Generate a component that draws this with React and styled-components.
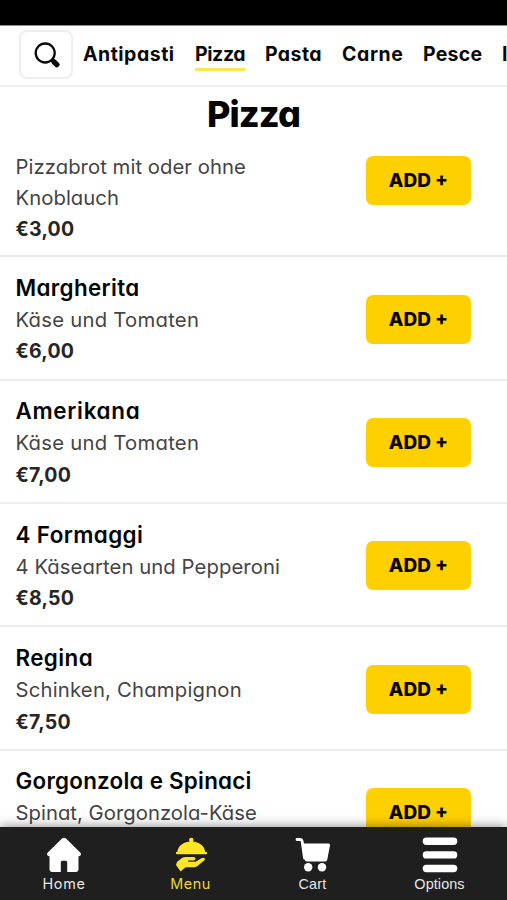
import React from 'react';
import styled, { createGlobalStyle } from 'styled-components';

const GlobalStyle = createGlobalStyle`
  * { box-sizing: border-box; }
  body {
    margin: 0;
    background: #fff;
    overflow: hidden;
    font-family: Inter, "Liberation Sans", sans-serif;
    font-feature-settings: "cv11";
  }
`;

const Screen = styled.div`
  width: 507px;
  height: 900px;
  display: flex;
  flex-direction: column;
  overflow: hidden;
  background: #fff;
`;

const StatusBar = styled.div`
  flex: none;
  height: 26px;
  background: #000;
  border-bottom: 1px solid #8c8c8c;
`;

const CategoryBar = styled.nav`
  flex: none;
  display: flex;
  align-items: flex-start;
  height: 61px;
  padding: 4px 0 0 19px;
  border-bottom: 2px solid #eee;
  overflow: hidden;
`;

const SearchButton = styled.button`
  flex: none;
  display: flex;
  align-items: center;
  justify-content: center;
  width: 54px;
  height: 49px;
  margin-right: 10px;
  padding: 0 0 0 1px;
  background: #fff;
  border: 2px solid #eee;
  border-radius: 8px;
`;

const Category = styled.a`
  flex: none;
  width: ${(props) => props.$width}px;
  height: 41px;
  margin-right: 20px;
  padding-top: 9px;
  color: #0a0a0a;
  font-size: 19.5px;
  font-weight: 700;
  line-height: 30px;
  letter-spacing: ${(props) => props.$spacing || 0}px;
  white-space: nowrap;
  border-bottom: 3px solid ${(props) => (props.$active ? '#f8e84e' : 'transparent')};
`;

const Heading = styled.h1`
  flex: none;
  height: 64px;
  margin: 0;
  padding-top: 4px;
  color: #050505;
  font-size: 36px;
  font-weight: 800;
  line-height: 46px;
  letter-spacing: -.9px;
  text-align: center;
`;

const List = styled.div`
  flex: 1;
  min-height: 0;
  overflow: hidden;
`;

const Row = styled.div`
  display: flex;
  align-items: ${(props) => (props.$scrolled ? 'flex-start' : 'center')};
  justify-content: space-between;
  height: ${(props) => (props.$scrolled ? 106.2 : 123.4)}px;
  padding: ${(props) => (props.$scrolled ? 1 : 2)}px 36px 0 15.500px;
  border-bottom: 2px solid #ececec;

  button {
    margin-top: ${(props) => (props.$scrolled ? 4 : 0.4)}px;
  }
`;

const Info = styled.div`
  width: 290px;
`;

const Name = styled.h2`
  margin: 0;
  color: #050505;
  font-size: 22.4px;
  font-weight: 600;
  line-height: 34px;
  letter-spacing: ${(props) => props.$spacing || 0}px;
  white-space: nowrap;
`;

const Description = styled.p`
  margin: 0;
  color: #444;
  font-size: 20.3px;
  line-height: 30.5px;
  letter-spacing: ${(props) => props.$spacing || 0}px;
  white-space: nowrap;
`;

const Price = styled.p`
  margin: 0;
  padding-top: 1px;
  color: #262626;
  font-size: 19.5px;
  font-weight: 700;
  line-height: 30.5px;
  letter-spacing: .2px;
`;

const AddButton = styled.button`
  width: 105px;
  height: 49px;
  padding: 0;
  background: #ffd000;
  border: 0;
  border-radius: 7px;
  color: #0a0800;
  font-family: inherit;
  font-size: 19px;
  font-weight: 800;
`;

const TabBar = styled.footer`
  flex: none;
  position: relative;
  display: flex;
  justify-content: space-around;
  height: 73px;
  padding-top: 10px;
  background: #1f1f1f;
  box-shadow: 0 0 11px rgba(0, 0, 0, .5);
`;

const Tab = styled.a`
  display: flex;
  flex-direction: column;
  align-items: center;
  width: ${(props) => props.$width}px;
  color: ${(props) => (props.$active ? '#fce625' : '#fff')};
`;

const TabLabel = styled.span`
  color: ${(props) => (props.$active ? '#e6da35' : '#e8e8e8')};
  font-family: ${(props) => (props.$plain ? '"Liberation Sans", sans-serif' : 'inherit')};
  font-size: 14.4px;
  line-height: 22px;
  letter-spacing: ${(props) => props.$spacing || 0}px;
  white-space: nowrap;
`;

const SearchIcon = () => (
  <svg width="26" height="26" viewBox="0 0 26 26" fill="none" stroke="#0a0a0a" strokeLinecap="round">
    <circle cx="11.200" cy="11" r="9.500" strokeWidth="2.300" />
    <path d="M18 18l1.500 1.500" strokeWidth="2.500" />
    <path d="M20 19.800l2.800 2.800" strokeWidth="5.400" />
  </svg>
);

const HomeIcon = () => (
  <svg width="36" height="36" viewBox="0 0 36 36" fill="currentColor">
    <path d="M16 1.600q2-1.500 4 0l14.200 14q1.800 2-.2 3.200-.8.500-1.500.5V32q0 3-3 3h-8.300V25.200q0-1.500-1.500-1.500h-3.400q-1.500 0-1.500 1.500V35H6.500q-3 0-3-3V19.300q-.700 0-1.500-.5-2-1.200-.200-3.200z" />
  </svg>
);

const ServingIcon = () => (
  <svg width="36" height="36" viewBox="0 0 36 36" fill="currentColor">
    <circle cx="18.300" cy="3" r="2.300" />
    <path d="M4.200 15.500C5 8.500 10.500 4.500 18.300 4.500s13.200 4 14 11z" />
    <path d="M3 15h31v1.500q0 .8-1 .8H4q-1 0-1-.8z" />
    <path d="M3 28l1-3 4.600-3.700q1.800-1.300 4-1.300h8.200q1.700.1 1.700 1.700t-1.700 1.700h-5.600v1.300h7.300l6.400-3.600q1.800-.7 2.700.2.900 1.100-.4 2.300l-6.700 5.500q-1.300 1.100-3 1.100h-7.300q-2 0-3.200 1.200l-3.400 3z" />
  </svg>
);

const CartIcon = () => (
  <svg width="36" height="36" viewBox="0 0 36 36" fill="currentColor">
    <path d="M2 2.500h3.300q1.500 0 1.800 1.500L9.500 21" fill="none" stroke="currentColor" strokeWidth="2.800" strokeLinecap="round" />
    <path d="M7.200 6.500h26.300q1.800 0 1.500 1.800l-2.600 13.600q-.4 2.700-3 2.700H13q-3 0-3.500-2.700z" />
    <circle cx="13.200" cy="30.300" r="4.200" />
    <circle cx="27" cy="30.300" r="4.200" />
  </svg>
);

const BarsIcon = () => (
  <svg width="36" height="36" viewBox="0 0 36 36" fill="currentColor">
    <rect x=".7" y=".6" width="34.600" height="7.400" rx="3.700" />
    <rect x=".7" y="14.200" width="34.600" height="7.400" rx="3.700" />
    <rect x=".7" y="27.800" width="34.600" height="7.400" rx="3.700" />
  </svg>
);

const categories = [
  { label: 'Antipasti', width: 92, spacing: 0.5 },
  { label: 'Pizza', width: 50, spacing: -0.4, active: true },
  { label: 'Pasta', width: 57, spacing: 0.4 },
  { label: 'Carne', width: 61, spacing: 0.6 },
  { label: 'Pesce', width: 59, spacing: 0.25 },
  { label: 'Insalata', width: 80 },
];

const dishes = [
  { lines: ['Pizzabrot mit oder ohne', 'Knoblauch'], lineSpacing: 0.05, price: '€3,00' },
  { name: 'Margherita', spacing: 0.35, lines: ['Käse und Tomaten'], lineSpacing: 0.25, price: '€6,00' },
  { name: 'Amerikana', spacing: 0.7, lines: ['Käse und Tomaten'], lineSpacing: 0.25, price: '€7,00' },
  { name: '4 Formaggi', spacing: 0.4, lines: ['4 Käsearten und Pepperoni'], lineSpacing: 0.07, price: '€8,50' },
  { name: 'Regina', spacing: 0.4, lines: ['Schinken, Champignon'], lineSpacing: 0.2, price: '€7,50' },
  { name: 'Gorgonzola e Spinaci', spacing: 0.24, lines: ['Spinat, Gorgonzola-Käse'], lineSpacing: 0.02 },
];

const tabs = [
  { label: 'Home', icon: HomeIcon, width: 43, spacing: 0.7 },
  { label: 'Menu', icon: ServingIcon, width: 40, spacing: 0.5, active: true },
  { label: 'Cart', icon: CartIcon, width: 34, spacing: 0.2, plain: true },
  { label: 'Options', icon: BarsIcon, width: 50, spacing: 0.1, plain: true },
];

const Dish = ({ dish }) => (
  <Row $scrolled={!dish.name}>
    <Info>
      {dish.name && <Name $spacing={dish.spacing}>{dish.name}</Name>}
      {dish.lines.map((line) => (
        <Description key={line} $spacing={dish.lineSpacing}>{line}</Description>
      ))}
      <Price>{dish.price || '\u00a0'}</Price>
    </Info>
    <AddButton>ADD +</AddButton>
  </Row>
);

const App = () => {
  return (
    <Screen>
      <GlobalStyle />
      <StatusBar />
      <CategoryBar>
        <SearchButton aria-label="Search"><SearchIcon /></SearchButton>
        {categories.map(({ label, width, active, spacing }) => (
          <Category key={label} $width={width} $active={active} $spacing={spacing}>{label}</Category>
        ))}
      </CategoryBar>
      <Heading>Pizza</Heading>
      <List>
        {dishes.map((dish) => <Dish key={dish.lines[0] + dish.price} dish={dish} />)}
      </List>
      <TabBar>
        {tabs.map(({ label, icon: Icon, width, active, plain, spacing }) => (
          <Tab key={label} $width={width} $active={active}>
            <Icon />
            <TabLabel $active={active} $plain={plain} $spacing={spacing}>{label}</TabLabel>
          </Tab>
        ))}
      </TabBar>
    </Screen>
  );
};

export default App;
